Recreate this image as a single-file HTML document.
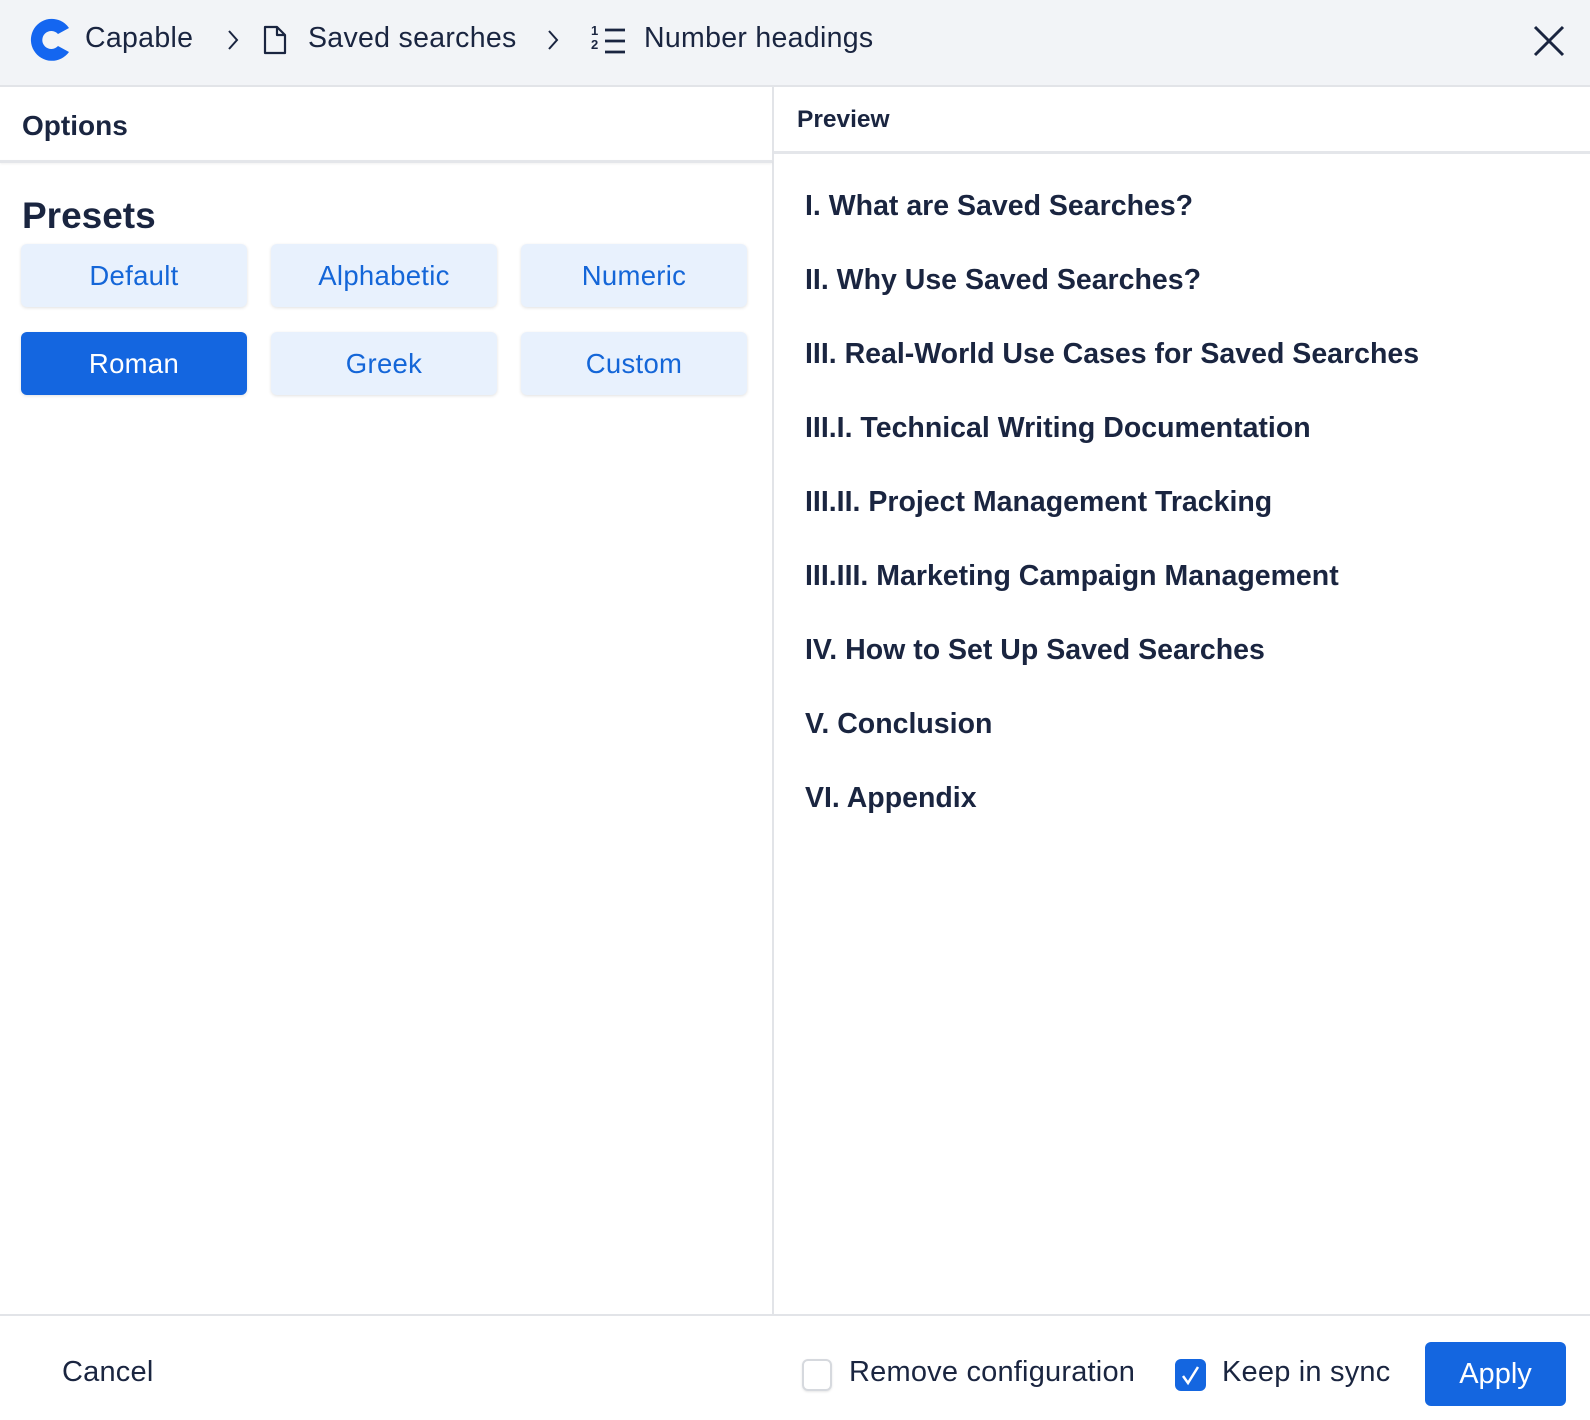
<!DOCTYPE html>
<html><head><meta charset="utf-8"><style>
*{box-sizing:border-box;margin:0;padding:0}
body{width:1590px;height:1420px;font-family:"Liberation Sans",sans-serif;color:#1a2540;background:#fff;position:relative;overflow:hidden}
.hdr{position:absolute;left:0;top:0;width:1590px;height:87px;background:#f2f4f7;border-bottom:2px solid #e2e4e8}
.t{position:absolute;white-space:nowrap}
.bc{font-size:28.5px;top:22px;letter-spacing:0.3px}
.btn{position:absolute;width:226px;height:63px;border-radius:6px;background:#e8f1fd;color:#1466d8;font-size:27.5px;display:flex;align-items:center;justify-content:center;box-shadow:0 1px 3px rgba(0,0,0,.12);letter-spacing:0.3px}
.btn.on{background:#1466e0;color:#fff}
.pv{position:absolute;left:805px;font-size:28.5px;font-weight:bold;white-space:nowrap}
.ft{font-size:29px;top:1356px;letter-spacing:0.2px}
</style></head><body>
<div class="hdr"></div>
<svg style="position:absolute;left:25px;top:16px" width="48" height="48" viewBox="0 0 48 48"><path d="M24 3 A21 21 0 1 0 44 36 L33 30 A9 9 0 1 1 33 18 L44 12 A21 21 0 0 0 24 3Z" fill="#1466f0"/></svg>
<div class="t bc" style="left:85px">Capable</div>
<svg style="position:absolute;left:225px;top:28px" width="16" height="24"><path d="M4 3 L12 12 L4 21" stroke="#1a2540" stroke-width="2" fill="none"/></svg>
<svg style="position:absolute;left:262px;top:24px" width="26" height="32"><path d="M3 3 H15 L23 11 V29 H3 Z M15 3 V11 H23" stroke="#1a2540" stroke-width="2.2" fill="none" stroke-linejoin="round"/></svg>
<div class="t bc" style="left:308px">Saved searches</div>
<svg style="position:absolute;left:545px;top:28px" width="16" height="24"><path d="M4 3 L12 12 L4 21" stroke="#1a2540" stroke-width="2" fill="none"/></svg>
<div class="t" style="left:591px;top:24px;font-size:13px;font-weight:bold;line-height:14px">1<br>2</div>
<svg style="position:absolute;left:603px;top:26px" width="24" height="30"><path d="M2 4 H22 M2 15 H22 M2 26 H22" stroke="#1a2540" stroke-width="2.8"/></svg>
<div class="t bc" style="left:644px">Number headings</div>
<svg style="position:absolute;left:1532px;top:24px" width="34" height="34"><path d="M3 3 L31 31 M31 3 L3 31" stroke="#1a2540" stroke-width="3"/></svg>

<div style="position:absolute;left:772px;top:87px;width:2px;height:1228px;background:#e2e4e8"></div>
<div class="t" style="left:22px;top:110px;font-size:28px;font-weight:bold">Options</div>
<div style="position:absolute;left:0;top:160px;width:772px;height:3px;background:#e4e6ea;box-shadow:0 1px 2px rgba(0,0,0,.06)"></div>
<div class="t" style="left:797px;top:106px;font-size:24.5px;font-weight:bold">Preview</div>
<div style="position:absolute;left:774px;top:151px;width:816px;height:3px;background:#e4e6ea"></div>

<div class="t" style="left:22px;top:195px;font-size:37px;font-weight:bold">Presets</div>
<div class="btn" style="left:21px;top:244px">Default</div>
<div class="btn" style="left:271px;top:244px">Alphabetic</div>
<div class="btn" style="left:521px;top:244px">Numeric</div>
<div class="btn on" style="left:21px;top:332px">Roman</div>
<div class="btn" style="left:271px;top:332px">Greek</div>
<div class="btn" style="left:521px;top:332px">Custom</div>

<div class="pv" style="top:190px">I. What are Saved Searches?</div>
<div class="pv" style="top:264px">II. Why Use Saved Searches?</div>
<div class="pv" style="top:338px">III. Real-World Use Cases for Saved Searches</div>
<div class="pv" style="top:412px">III.I. Technical Writing Documentation</div>
<div class="pv" style="top:486px">III.II. Project Management Tracking</div>
<div class="pv" style="top:560px">III.III. Marketing Campaign Management</div>
<div class="pv" style="top:634px">IV. How to Set Up Saved Searches</div>
<div class="pv" style="top:708px">V. Conclusion</div>
<div class="pv" style="top:782px">VI. Appendix</div>

<div style="position:absolute;left:0;top:1314px;width:1590px;height:2px;background:#e2e4e8"></div>
<div class="t ft" style="left:62px">Cancel</div>
<div style="position:absolute;left:802px;top:1359px;width:30px;height:32px;border:2px solid #d6d9de;border-radius:6px;box-shadow:0 1px 2px rgba(0,0,0,.1)"></div>
<div class="t ft" style="left:849px">Remove configuration</div>
<div style="position:absolute;left:1175px;top:1359px;width:31px;height:32px;background:#1466e0;border-radius:6px"></div>
<svg style="position:absolute;left:1175px;top:1359px" width="31" height="32"><path d="M8 17 L13 24 L23 8" stroke="#fff" stroke-width="2.5" fill="none"/></svg>
<div class="t ft" style="left:1222px">Keep in sync</div>
<div style="position:absolute;left:1425px;top:1342px;width:141px;height:64px;background:#1466e0;border-radius:6px;color:#fff;font-size:29px;display:flex;align-items:center;justify-content:center">Apply</div>
</body></html>
